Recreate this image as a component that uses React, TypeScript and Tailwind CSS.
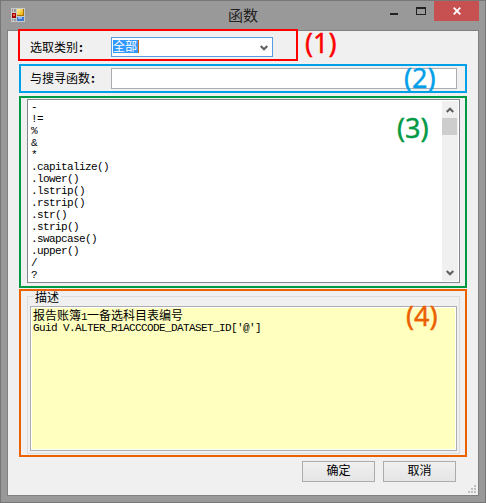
import type { ReactNode } from 'react';

const FUNCTIONS = [
  '-', '!=', '%', '&', '*', '.capitalize()', '.lower()', '.lstrip()', '.rstrip()',
  '.str()', '.strip()', '.swapcase()', '.upper()', '/', '?',
];

const CJK = "font-['Noto_Sans_CJK_SC',sans-serif]";

function Chevron({ up = false }: { up?: boolean }) {
  return (
    <svg width="8" height="6" viewBox="0 0 8 6" className={up ? 'rotate-180' : ''}>
      <path d="M0.7 1l3.3 3.2L7.3 1" fill="none" stroke="#606060" strokeWidth="2.2" />
    </svg>
  );
}

function AppIcon() {
  return (
    <svg width="14" height="14" viewBox="0 0 14 14" shapeRendering="crispEdges">
      <defs>
        <linearGradient id="gold" x1="0" y1="0" x2="1" y2="1">
          <stop offset="0" stopColor="#fff3a0" />
          <stop offset="1" stopColor="#f0ac00" />
        </linearGradient>
      </defs>
      <rect width="14" height="14" fill="#c9c9c9" />
      <path d="M1 1h1v3H1zM3 1h2v3H3zM1 11h1v2H1zM3 11h2v2H3z" fill="#999" />
      <rect x="6" y="1" width="7" height="7" fill="#a87400" />
      <rect x="6" y="1" width="6" height="6" fill="url(#gold)" />
      <rect x="1" y="5" width="4" height="5" fill="#a00000" />
      <rect x="2" y="6" width="2" height="2" fill="#f06050" />
      <rect x="6" y="9" width="7" height="4" fill="#3d78d0" />
      <rect x="7" y="9" width="4" height="2" fill="#8ab8f8" />
    </svg>
  );
}

function Callout({ className, children }: { className: string; children: ReactNode }) {
  return (
    <span className={`absolute font-['Noto_Sans',sans-serif] text-[27px] leading-[27px] [-webkit-text-stroke:0.4px] ${className}`}>
      {children}
    </span>
  );
}

function DialogButton({ children }: { children: ReactNode }) {
  return (
    <button className="flex h-[21px] w-[73px] items-center justify-center border border-[#acacac] bg-linear-to-b from-[#f0f0f0] to-[#e5e5e5] pb-[3px] text-xs leading-3">
      {children}
    </button>
  );
}

export default function App() {
  return (
    <div lang="zh-CN" className={`relative flex h-[503px] w-[486px] flex-col border border-[#777] bg-[#999] text-black ${CJK}`}>
      <header className="flex h-[29px] shrink-0 items-start">
        <div className="w-[60px] pt-[7px] pl-[10px]"><AppIcon /></div>
        <h1 className="flex-1 pt-[6px] pl-[167px] text-[15px] leading-4 text-[#222]">函数</h1>
        <div className="flex w-[44px] pt-[6px]">
          <svg width="44" height="10" shapeRendering="crispEdges">
            <path d="M0 6h8v2H0z" fill="#222" />
            <path d="M26 0h10v8H26zM27 2v5h8V2z" fillRule="evenodd" fill="#222" />
          </svg>
        </div>
        <div className="mr-[6px] flex h-5 w-[45px] items-center justify-center bg-[#c75050]">
          <svg width="8" height="8" viewBox="0 0 8 8"><path d="M.7.7l6.6 6.6M7.3.7L.7 7.3" stroke="#fff" strokeWidth="1.8" /></svg>
        </div>
      </header>

      <main className="ml-[6px] flex h-[466px] w-[472px] shrink-0 flex-col border border-[#808080] bg-[#f0f0f0] pl-[11px]">
        <section className="-mt-[2px] ml-[-1px] flex h-8 w-[280px] shrink-0 border-2 border-[#f00] bg-[#f0f0f0]">
          <label className="w-[91px] pt-[10px] pl-[10px] text-xs leading-3">选取类别<span className="ml-px font-bold">:</span></label>
          <div className="mt-[6px] flex h-5 w-[162px] justify-between border border-[#569de5] bg-white pt-[2px] pl-px">
            <span className="h-[13px] w-[26px] border-r border-[#d07010] bg-[#3399ff] text-xs leading-3 text-white">全部</span>
            <span className="mt-[5px] mr-1"><Chevron /></span>
          </div>
        </section>

        <section className="mt-[3px] flex h-[29px] w-[448px] shrink-0 border-2 border-[#00a0e9]">
          <label className="w-[90px] pt-[6px] pl-[9px] text-xs leading-3">与搜寻函数<span className="ml-px font-bold">:</span></label>
          <div className="mt-[2px] h-[21px] w-[346px] border border-[#abadb3] bg-white" />
        </section>

        <section className="mt-[3px] h-48 w-[448px] shrink-0 border-2 border-[#009944] pt-px pl-[6px]">
          <div className="flex h-[184px] w-[433px] justify-between border border-[#828790] bg-white">
            <ul className="pt-px pl-[3px] font-['Liberation_Mono',monospace] text-[11px] leading-3 tracking-[-0.6px]">
              {FUNCTIONS.map((name) => <li key={name}>{name}</li>)}
            </ul>
            <div className="mt-px mr-px flex h-[180px] w-4 flex-col items-center justify-between bg-[#f0f0f0] pt-[6px] pb-[5px]">
              <div className="flex w-full flex-col items-center">
                <Chevron up />
                <div className="mt-[5px] mr-px h-[17px] w-[15px] bg-[#cdcdcd]" />
              </div>
              <Chevron />
            </div>
          </div>
        </section>

        <section className="mt-px h-[168px] w-[448px] shrink-0 border-2 border-[#eb6100] pt-[5px] pl-[6px]">
          <div className="flex h-[158px] w-[433px] flex-col border border-[#dcdcdc] pl-[2px]">
            <h2 className="-mt-[6px] ml-[4px] h-[13px] w-[27px] shrink-0 bg-[#f0f0f0] pl-px text-xs leading-3">描述</h2>
            <div className="mt-[2px] h-[145px] w-[427px] shrink-0 border border-[#abadb3] bg-white p-px">
              <div className="h-full bg-[#ffffc0] pt-px pl-px text-xs leading-3">
                <p className="h-3">报告账簿<span className="font-['Liberation_Mono',monospace] text-[11px] tracking-[-0.6px]">1</span>一备选科目表编号</p>
                <p className="mt-px h-3 font-['Liberation_Mono',monospace] text-[11px] leading-3 tracking-[-0.6px]">Guid V.ALTER_R1ACCCODE_DATASET_ID['@']</p>
              </div>
            </div>
          </div>
        </section>

        <footer className="mt-1 flex shrink-0 gap-2 pl-[283px]">
          <DialogButton>确定</DialogButton>
          <DialogButton>取消</DialogButton>
        </footer>
        <svg className="mt-[3px] ml-[449px] shrink-0" width="8" height="8" shapeRendering="crispEdges">
          <path d="M6 0h2v2H6zM3 3h2v2H3zM6 3h2v2H6zM0 6h2v2H0zM3 6h2v2H3zM6 6h2v2H6z" fill="#bfbfbf" />
        </svg>
      </main>

      <Callout className="top-[28px] left-[304px] text-[#f00]">(1)</Callout>
      <Callout className="top-[63px] left-[403px] text-[#00a0e9]">(2)</Callout>
      <Callout className="top-[113px] left-[396px] text-[#009944]">(3)</Callout>
      <Callout className="top-[301px] left-[405px] text-[#eb6100]">(4)</Callout>
    </div>
  );
}
